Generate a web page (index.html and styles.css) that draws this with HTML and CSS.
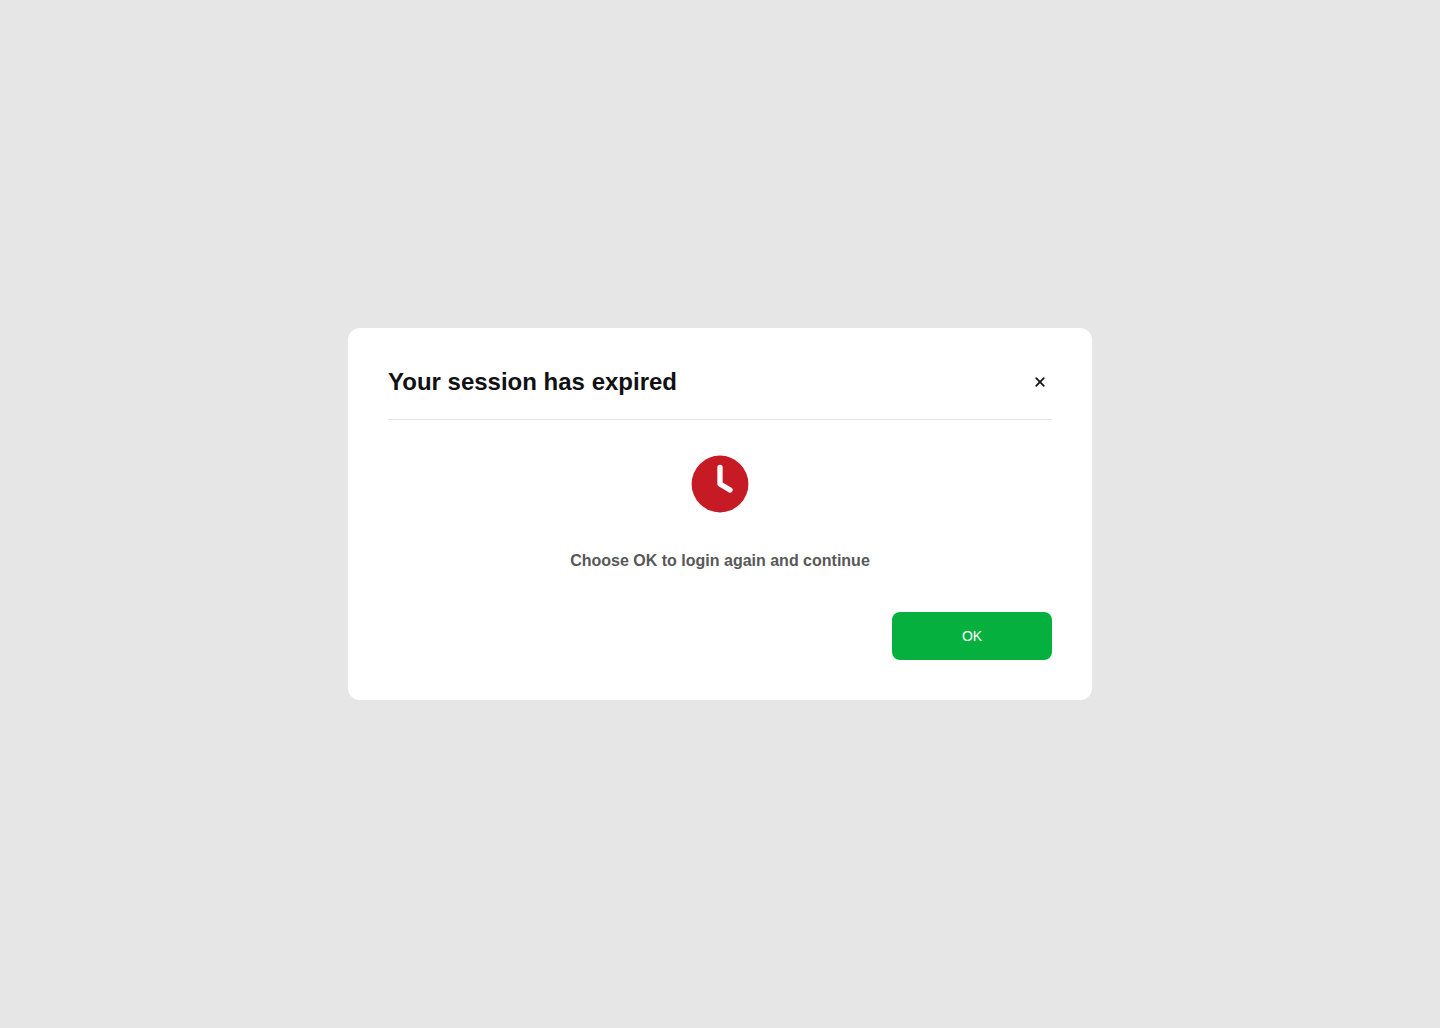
FILE: index.html
```html
<!DOCTYPE html>
<html lang="en">
<head>
<meta charset="utf-8">
<meta name="viewport" content="width=device-width, initial-scale=1">
<title>Your session has expired</title>
<link rel="stylesheet" href="styles.css">
</head>
<body>
<main class="dialog" role="dialog" aria-labelledby="dialog-title">
  <header class="dialog-header">
    <h1 class="dialog-title" id="dialog-title">Your session has expired</h1>
    <button class="close" type="button" aria-label="Close">
      <svg width="24" height="24" viewBox="0 0 24 24" fill="none" stroke="currentColor" stroke-width="1.7" stroke-linecap="round" aria-hidden="true"><path d="M8.2 8.2l7.6 7.6M15.8 8.2l-7.6 7.6"/></svg>
    </button>
  </header>
  <div class="dialog-body">
    <svg class="clock" width="64" height="64" viewBox="0 0 64 64" aria-hidden="true"><circle cx="32" cy="32" r="28.4" fill="#c61b25"/><path d="M32 15.3V32l10 6" fill="none" stroke="#fff" stroke-width="5.3" stroke-linecap="round" stroke-linejoin="round"/></svg>
    <p class="message">Choose OK to login again and continue</p>
  </div>
  <footer class="dialog-footer">
    <button class="primary" type="button">OK</button>
  </footer>
</main>
</body>
</html>
```
FILE: styles.css
```css
* {
  box-sizing: border-box;
}

body {
  margin: 0;
  min-height: 100vh;
  padding: 16px;
  display: flex;
  align-items: center;
  justify-content: center;
  background: #e6e6e6;
  color: #111113;
  font-family: "Liberation Sans", Arial, sans-serif;
}

.dialog {
  width: 100%;
  max-width: 744px;
  padding: 40px;
  border-radius: 12px;
  background: #fff;
}

.dialog-header {
  display: flex;
  align-items: center;
  justify-content: space-between;
  gap: 16px;
  padding-bottom: 23px;
  border-bottom: 1px solid #e5e5e5;
}

.dialog-title {
  margin: 0;
  font-size: 24px;
  line-height: 28px;
}

.close {
  display: flex;
  padding: 0;
  border: 0;
  background: none;
  color: inherit;
  cursor: pointer;
}

.dialog-body {
  display: flex;
  flex-direction: column;
  align-items: center;
  gap: 32px;
  padding: 32px 0 38px;
}

.message {
  margin: 0;
  color: #585858;
  font-size: 16px;
  font-weight: 700;
  line-height: 26px;
  text-align: center;
}

.dialog-footer {
  display: flex;
  justify-content: flex-end;
}

.primary {
  width: 160px;
  height: 48px;
  padding: 0 16px;
  border: 0;
  border-radius: 8px;
  background: #06b03e;
  color: #fff;
  font: 14px/20px "Liberation Sans", Arial, sans-serif;
  cursor: pointer;
}
```
